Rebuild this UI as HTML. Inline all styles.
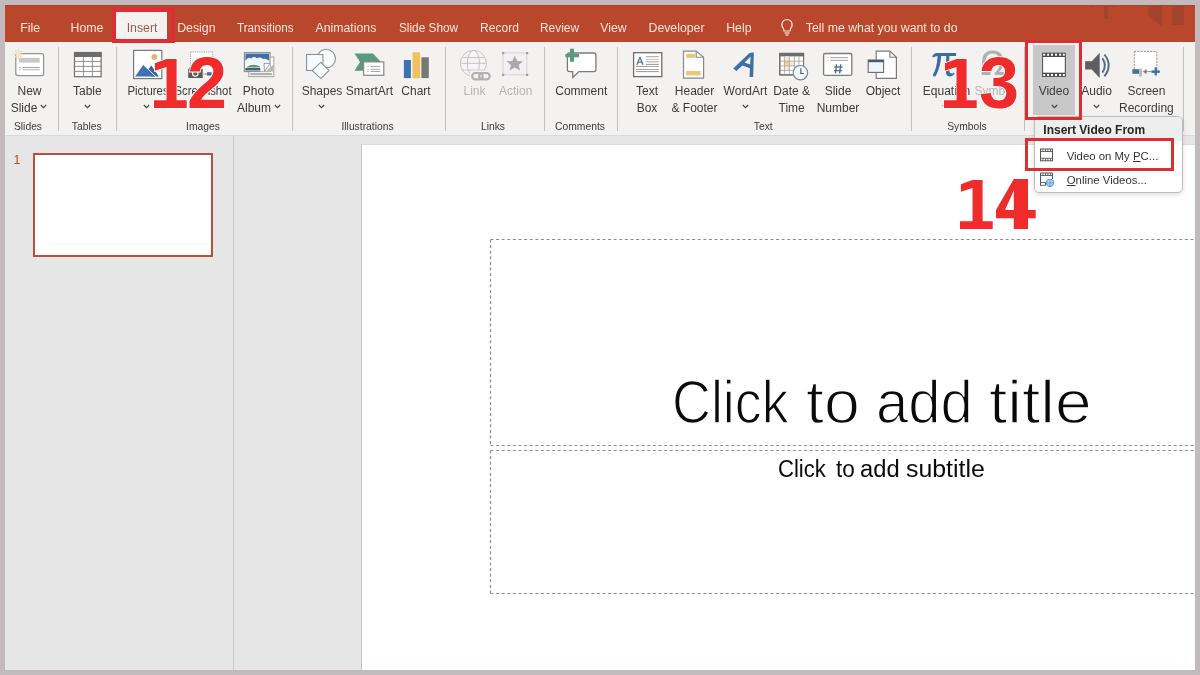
<!DOCTYPE html>
<html><head><meta charset="utf-8"><style>
html,body{margin:0;padding:0;}
body{width:1200px;height:675px;overflow:hidden;position:relative;background:#c2babc;font-family:"Liberation Sans", sans-serif;}
#root{position:absolute;left:0;top:0;width:1200px;height:675px;will-change:transform;}
</style></head><body>
<div id="root"><div style="position:absolute;left:5px;top:5px;width:1190px;height:37px;background:#b8472b;"></div><div style="position:absolute;left:5px;top:5px;width:1190px;height:1px;background:#a5402a;"></div><svg style="position:absolute;left:1085px;top:5px;" width="110" height="25" viewBox="0 0 110 25"><g fill="#a4432b"><rect x="6" y="0" width="2" height="2"/><rect x="19" y="0" width="4" height="14"/><rect x="24" y="0" width="5" height="2"/><polygon points="63,0 77,0 77,22 63,10"/><rect x="87" y="0" width="12" height="20"/></g></svg><div style="position:absolute;left:5px;top:42px;width:1190px;height:93px;background:#f3f2f1;"></div><div style="position:absolute;left:5px;top:135px;width:1190px;height:1px;background:#d9d9d9;"></div><div style="position:absolute;left:5px;top:136px;width:1190px;height:534px;background:#e6e6e6;"></div><div style="position:absolute;left:233px;top:136px;width:1px;height:534px;background:#c8c8c8;"></div><div style="position:absolute;left:20.30px;top:22.39px;height:12.3px;line-height:12.3px;font-size:12.3px;color:#fbe6de;font-weight:400;white-space:nowrap;">File</div><div style="position:absolute;left:70.50px;top:22.39px;height:12.3px;line-height:12.3px;font-size:12.3px;color:#fbe6de;font-weight:400;white-space:nowrap;">Home</div><div style="position:absolute;left:177.20px;top:22.39px;height:12.3px;line-height:12.3px;font-size:12.3px;color:#fbe6de;font-weight:400;white-space:nowrap;">Design</div><div style="position:absolute;left:236.80px;top:22.39px;height:12.3px;line-height:12.3px;font-size:12.3px;color:#fbe6de;font-weight:400;white-space:nowrap;transform:scaleX(0.95);transform-origin:0 0;">Transitions</div><div style="position:absolute;left:315.50px;top:22.39px;height:12.3px;line-height:12.3px;font-size:12.3px;color:#fbe6de;font-weight:400;white-space:nowrap;">Animations</div><div style="position:absolute;left:398.50px;top:22.39px;height:12.3px;line-height:12.3px;font-size:12.3px;color:#fbe6de;font-weight:400;white-space:nowrap;transform:scaleX(0.96);transform-origin:0 0;">Slide Show</div><div style="position:absolute;left:479.50px;top:22.39px;height:12.3px;line-height:12.3px;font-size:12.3px;color:#fbe6de;font-weight:400;white-space:nowrap;transform:scaleX(0.98);transform-origin:0 0;">Record</div><div style="position:absolute;left:540.20px;top:22.39px;height:12.3px;line-height:12.3px;font-size:12.3px;color:#fbe6de;font-weight:400;white-space:nowrap;transform:scaleX(0.97);transform-origin:0 0;">Review</div><div style="position:absolute;left:600.20px;top:22.39px;height:12.3px;line-height:12.3px;font-size:12.3px;color:#fbe6de;font-weight:400;white-space:nowrap;">View</div><div style="position:absolute;left:648.50px;top:22.39px;height:12.3px;line-height:12.3px;font-size:12.3px;color:#fbe6de;font-weight:400;white-space:nowrap;">Developer</div><div style="position:absolute;left:726.20px;top:22.39px;height:12.3px;line-height:12.3px;font-size:12.3px;color:#fbe6de;font-weight:400;white-space:nowrap;">Help</div><div style="position:absolute;left:805.80px;top:22.39px;height:12.3px;line-height:12.3px;font-size:12.3px;color:#fbe6de;font-weight:400;white-space:nowrap;">Tell me what you want to do</div><svg style="position:absolute;left:778px;top:17px;" width="18" height="20" viewBox="0 0 18 20"><g fill="none" stroke="#fbe6de" stroke-width="1.2"><path d="M5.5 11.5 C3 9.5 3 3 9 2.5 C15 3 15 9.5 12.5 11.5 L12 14 L6 14 Z"/><line x1="6.5" y1="16" x2="11.5" y2="16"/><line x1="7.5" y1="18" x2="10.5" y2="18"/></g></svg><div style="position:absolute;left:116px;top:12px;width:51px;height:30px;background:#f3f2f1;"></div><div style="position:absolute;left:126.70px;top:22.39px;height:12.3px;line-height:12.3px;font-size:12.3px;color:#8f5e52;font-weight:400;white-space:nowrap;">Insert</div><div style="position:absolute;left:58px;top:47px;width:1px;height:84px;background:#c3c1bf;"></div><div style="position:absolute;left:116px;top:47px;width:1px;height:84px;background:#c3c1bf;"></div><div style="position:absolute;left:292px;top:47px;width:1px;height:84px;background:#c3c1bf;"></div><div style="position:absolute;left:445px;top:47px;width:1px;height:84px;background:#c3c1bf;"></div><div style="position:absolute;left:544px;top:47px;width:1px;height:84px;background:#c3c1bf;"></div><div style="position:absolute;left:617px;top:47px;width:1px;height:84px;background:#c3c1bf;"></div><div style="position:absolute;left:911px;top:47px;width:1px;height:84px;background:#c3c1bf;"></div><div style="position:absolute;left:1024px;top:47px;width:1px;height:84px;background:#c3c1bf;"></div><div style="position:absolute;left:1183px;top:47px;width:1px;height:84px;background:#c3c1bf;"></div><div style="position:absolute;left:361px;top:144px;width:834px;height:526px;background:#ffffff;border-left:1px solid #c4c4c4;border-top:1px solid #dcdcdc;box-sizing:border-box;"></div><div style="position:absolute;left:33px;top:153px;width:180px;height:104px;background:#fff;border:2.5px solid #b4503d;box-sizing:border-box;"></div><div style="position:absolute;left:13.50px;top:154.09px;height:12.3px;line-height:12.3px;font-size:12.3px;color:#b7472a;font-weight:400;white-space:nowrap;">1</div><svg style="position:absolute;left:489px;top:238px;" width="706" height="360" viewBox="0 0 706 360"><g stroke="#8c8c8c" stroke-width="1.2" stroke-dasharray="3 2.6" fill="none"><line x1="1.5" y1="1.5" x2="706" y2="1.5"/><line x1="1.5" y1="1.5" x2="1.5" y2="207.5"/><line x1="1.5" y1="207.5" x2="706" y2="207.5"/><line x1="1.5" y1="212.5" x2="706" y2="212.5"/><line x1="1.5" y1="212.5" x2="1.5" y2="355.5"/><line x1="1.5" y1="355.5" x2="706" y2="355.5"/></g></svg><div style="position:absolute;left:672.31px;top:370.92px;height:62px;line-height:62px;font-size:62px;color:#0a0a0a;font-weight:400;white-space:nowrap;transform:scaleX(0.8689);transform-origin:0 0;-webkit-text-stroke:1.4px #fff;">Click</div><div style="position:absolute;left:806.43px;top:370.92px;height:62px;line-height:62px;font-size:62px;color:#0a0a0a;font-weight:400;white-space:nowrap;transform:scaleX(1.0391);transform-origin:0 0;-webkit-text-stroke:1.4px #fff;">to</div><div style="position:absolute;left:876.10px;top:370.92px;height:62px;line-height:62px;font-size:62px;color:#0a0a0a;font-weight:400;white-space:nowrap;transform:scaleX(0.9365);transform-origin:0 0;-webkit-text-stroke:1.4px #fff;">add</div><div style="position:absolute;left:988.90px;top:370.92px;height:62px;line-height:62px;font-size:62px;color:#0a0a0a;font-weight:400;white-space:nowrap;transform:scaleX(1.0645);transform-origin:0 0;-webkit-text-stroke:1.4px #fff;">title</div><div style="position:absolute;left:777.66px;top:457.61px;height:23.5px;line-height:23.5px;font-size:23.5px;color:#0a0a0a;font-weight:400;white-space:nowrap;transform:scaleX(0.94);transform-origin:0 0;">Click</div><div style="position:absolute;left:835.81px;top:457.61px;height:23.5px;line-height:23.5px;font-size:23.5px;color:#0a0a0a;font-weight:400;white-space:nowrap;transform:scaleX(0.9579);transform-origin:0 0;">to</div><div style="position:absolute;left:859.99px;top:457.61px;height:23.5px;line-height:23.5px;font-size:23.5px;color:#0a0a0a;font-weight:400;white-space:nowrap;transform:scaleX(1.0108);transform-origin:0 0;">add</div><div style="position:absolute;left:905.94px;top:457.61px;height:23.5px;line-height:23.5px;font-size:23.5px;color:#0a0a0a;font-weight:400;white-space:nowrap;transform:scaleX(1.0589);transform-origin:0 0;">subtitle</div><div style="position:absolute;left:-120.50px;top:85.04px;width:300px;height:12px;line-height:12px;font-size:12px;color:#3b3b3b;font-weight:400;text-align:center;white-space:nowrap;">New</div><div style="position:absolute;left:-126.00px;top:101.64px;width:300px;height:12px;line-height:12px;font-size:12px;color:#3b3b3b;font-weight:400;text-align:center;white-space:nowrap;">Slide</div><svg style="position:absolute;left:40.0px;top:103.8px;" width="7" height="5" viewBox="0 0 7 5"><polyline points="0.8,1 3.5,3.6 6.2,1" fill="none" stroke="#444" stroke-width="1.2"/></svg><div style="position:absolute;left:-122.00px;top:122.38px;width:300px;height:10.3px;line-height:10.3px;font-size:10.3px;color:#3b3b3b;font-weight:400;text-align:center;white-space:nowrap;">Slides</div><div style="position:absolute;left:-62.70px;top:85.04px;width:300px;height:12px;line-height:12px;font-size:12px;color:#3b3b3b;font-weight:400;text-align:center;white-space:nowrap;">Table</div><svg style="position:absolute;left:83.5px;top:103.8px;" width="7" height="5" viewBox="0 0 7 5"><polyline points="0.8,1 3.5,3.6 6.2,1" fill="none" stroke="#444" stroke-width="1.2"/></svg><div style="position:absolute;left:-63.30px;top:122.38px;width:300px;height:10.3px;line-height:10.3px;font-size:10.3px;color:#3b3b3b;font-weight:400;text-align:center;white-space:nowrap;">Tables</div><div style="position:absolute;left:-2.50px;top:85.04px;width:300px;height:12px;line-height:12px;font-size:12px;color:#3b3b3b;font-weight:400;text-align:center;white-space:nowrap;transform:scaleX(0.95);">Pictures</div><svg style="position:absolute;left:143.0px;top:103.8px;" width="7" height="5" viewBox="0 0 7 5"><polyline points="0.8,1 3.5,3.6 6.2,1" fill="none" stroke="#444" stroke-width="1.2"/></svg><div style="position:absolute;left:52.70px;top:85.04px;width:300px;height:12px;line-height:12px;font-size:12px;color:#3b3b3b;font-weight:400;text-align:center;white-space:nowrap;transform:scaleX(0.94);">Screenshot</div><div style="position:absolute;left:108.50px;top:85.04px;width:300px;height:12px;line-height:12px;font-size:12px;color:#3b3b3b;font-weight:400;text-align:center;white-space:nowrap;">Photo</div><div style="position:absolute;left:104.00px;top:101.64px;width:300px;height:12px;line-height:12px;font-size:12px;color:#3b3b3b;font-weight:400;text-align:center;white-space:nowrap;">Album</div><svg style="position:absolute;left:274.0px;top:103.8px;" width="7" height="5" viewBox="0 0 7 5"><polyline points="0.8,1 3.5,3.6 6.2,1" fill="none" stroke="#444" stroke-width="1.2"/></svg><div style="position:absolute;left:53.00px;top:122.38px;width:300px;height:10.3px;line-height:10.3px;font-size:10.3px;color:#3b3b3b;font-weight:400;text-align:center;white-space:nowrap;">Images</div><div style="position:absolute;left:172.00px;top:85.04px;width:300px;height:12px;line-height:12px;font-size:12px;color:#3b3b3b;font-weight:400;text-align:center;white-space:nowrap;">Shapes</div><svg style="position:absolute;left:317.5px;top:103.8px;" width="7" height="5" viewBox="0 0 7 5"><polyline points="0.8,1 3.5,3.6 6.2,1" fill="none" stroke="#444" stroke-width="1.2"/></svg><div style="position:absolute;left:219.50px;top:85.04px;width:300px;height:12px;line-height:12px;font-size:12px;color:#3b3b3b;font-weight:400;text-align:center;white-space:nowrap;">SmartArt</div><div style="position:absolute;left:266.00px;top:85.04px;width:300px;height:12px;line-height:12px;font-size:12px;color:#3b3b3b;font-weight:400;text-align:center;white-space:nowrap;">Chart</div><div style="position:absolute;left:217.50px;top:122.38px;width:300px;height:10.3px;line-height:10.3px;font-size:10.3px;color:#3b3b3b;font-weight:400;text-align:center;white-space:nowrap;">Illustrations</div><div style="position:absolute;left:324.50px;top:85.04px;width:300px;height:12px;line-height:12px;font-size:12px;color:#b4b4b4;font-weight:400;text-align:center;white-space:nowrap;">Link</div><div style="position:absolute;left:365.70px;top:85.04px;width:300px;height:12px;line-height:12px;font-size:12px;color:#b4b4b4;font-weight:400;text-align:center;white-space:nowrap;">Action</div><div style="position:absolute;left:343.00px;top:122.38px;width:300px;height:10.3px;line-height:10.3px;font-size:10.3px;color:#3b3b3b;font-weight:400;text-align:center;white-space:nowrap;">Links</div><div style="position:absolute;left:431.30px;top:85.04px;width:300px;height:12px;line-height:12px;font-size:12px;color:#3b3b3b;font-weight:400;text-align:center;white-space:nowrap;">Comment</div><div style="position:absolute;left:430.00px;top:122.38px;width:300px;height:10.3px;line-height:10.3px;font-size:10.3px;color:#3b3b3b;font-weight:400;text-align:center;white-space:nowrap;">Comments</div><div style="position:absolute;left:497.00px;top:85.04px;width:300px;height:12px;line-height:12px;font-size:12px;color:#3b3b3b;font-weight:400;text-align:center;white-space:nowrap;">Text</div><div style="position:absolute;left:497.00px;top:101.64px;width:300px;height:12px;line-height:12px;font-size:12px;color:#3b3b3b;font-weight:400;text-align:center;white-space:nowrap;">Box</div><div style="position:absolute;left:544.50px;top:85.04px;width:300px;height:12px;line-height:12px;font-size:12px;color:#3b3b3b;font-weight:400;text-align:center;white-space:nowrap;">Header</div><div style="position:absolute;left:544.50px;top:101.64px;width:300px;height:12px;line-height:12px;font-size:12px;color:#3b3b3b;font-weight:400;text-align:center;white-space:nowrap;">&amp; Footer</div><div style="position:absolute;left:595.50px;top:85.04px;width:300px;height:12px;line-height:12px;font-size:12px;color:#3b3b3b;font-weight:400;text-align:center;white-space:nowrap;">WordArt</div><svg style="position:absolute;left:741.5px;top:103.8px;" width="7" height="5" viewBox="0 0 7 5"><polyline points="0.8,1 3.5,3.6 6.2,1" fill="none" stroke="#444" stroke-width="1.2"/></svg><div style="position:absolute;left:641.70px;top:85.04px;width:300px;height:12px;line-height:12px;font-size:12px;color:#3b3b3b;font-weight:400;text-align:center;white-space:nowrap;">Date &amp;</div><div style="position:absolute;left:641.70px;top:101.64px;width:300px;height:12px;line-height:12px;font-size:12px;color:#3b3b3b;font-weight:400;text-align:center;white-space:nowrap;">Time</div><div style="position:absolute;left:688.00px;top:85.04px;width:300px;height:12px;line-height:12px;font-size:12px;color:#3b3b3b;font-weight:400;text-align:center;white-space:nowrap;">Slide</div><div style="position:absolute;left:688.00px;top:101.64px;width:300px;height:12px;line-height:12px;font-size:12px;color:#3b3b3b;font-weight:400;text-align:center;white-space:nowrap;">Number</div><div style="position:absolute;left:733.00px;top:85.04px;width:300px;height:12px;line-height:12px;font-size:12px;color:#3b3b3b;font-weight:400;text-align:center;white-space:nowrap;">Object</div><div style="position:absolute;left:613.30px;top:122.38px;width:300px;height:10.3px;line-height:10.3px;font-size:10.3px;color:#3b3b3b;font-weight:400;text-align:center;white-space:nowrap;">Text</div><div style="position:absolute;left:922.80px;top:85.04px;height:12px;line-height:12px;font-size:12px;color:#3b3b3b;font-weight:400;white-space:nowrap;">Equation</div><svg style="position:absolute;left:941.5px;top:103.8px;" width="7" height="5" viewBox="0 0 7 5"><polyline points="0.8,1 3.5,3.6 6.2,1" fill="none" stroke="#444" stroke-width="1.2"/></svg><div style="position:absolute;left:974.60px;top:85.04px;height:12px;line-height:12px;font-size:12px;color:#b4b4b4;font-weight:400;white-space:nowrap;">Symbol</div><div style="position:absolute;left:816.90px;top:122.38px;width:300px;height:10.3px;line-height:10.3px;font-size:10.3px;color:#3b3b3b;font-weight:400;text-align:center;white-space:nowrap;">Symbols</div><div style="position:absolute;left:1033px;top:45px;width:42px;height:70px;background:#c8c8c8;"></div><div style="position:absolute;left:903.90px;top:85.04px;width:300px;height:12px;line-height:12px;font-size:12px;color:#3b3b3b;font-weight:400;text-align:center;white-space:nowrap;">Video</div><svg style="position:absolute;left:1050.5px;top:103.8px;" width="7" height="5" viewBox="0 0 7 5"><polyline points="0.8,1 3.5,3.6 6.2,1" fill="none" stroke="#444" stroke-width="1.2"/></svg><div style="position:absolute;left:946.60px;top:85.04px;width:300px;height:12px;line-height:12px;font-size:12px;color:#3b3b3b;font-weight:400;text-align:center;white-space:nowrap;">Audio</div><svg style="position:absolute;left:1092.5px;top:103.8px;" width="7" height="5" viewBox="0 0 7 5"><polyline points="0.8,1 3.5,3.6 6.2,1" fill="none" stroke="#444" stroke-width="1.2"/></svg><div style="position:absolute;left:996.40px;top:85.04px;width:300px;height:12px;line-height:12px;font-size:12px;color:#3b3b3b;font-weight:400;text-align:center;white-space:nowrap;">Screen</div><div style="position:absolute;left:996.40px;top:101.64px;width:300px;height:12px;line-height:12px;font-size:12px;color:#3b3b3b;font-weight:400;text-align:center;white-space:nowrap;">Recording</div><svg style="position:absolute;left:8px;top:46px;" width="40" height="34" viewBox="0 0 40 34"><rect x="7.8" y="7.5" width="27.8" height="22" rx="2" fill="#fff" stroke="#939393" stroke-width="1.25"/><rect x="11" y="11.8" width="20.7" height="4.8" fill="#c9c9c9"/><rect x="11" y="21" width="1.8" height="0.9" fill="#999"/><rect x="14.5" y="21" width="17.2" height="0.9" fill="#999"/><rect x="11" y="23.3" width="1.8" height="0.9" fill="#aaa"/><rect x="14.5" y="23.3" width="17.2" height="0.9" fill="#aaa"/><g stroke="#ecdcae" stroke-width="1.1"><line x1="10.3" y1="3" x2="10.3" y2="13.2"/><line x1="5.2" y1="8.1" x2="15.4" y2="8.1"/><line x1="6.7" y1="4.5" x2="13.9" y2="11.7"/><line x1="13.9" y1="4.5" x2="6.7" y2="11.7"/></g><circle cx="10.3" cy="8.1" r="2.4" fill="#f5e6c2"/></svg><svg style="position:absolute;left:68px;top:46px;" width="40" height="34" viewBox="0 0 40 34"><rect x="6.5" y="6.5" width="26.6" height="24.2" fill="#fff" stroke="#6d6d6d" stroke-width="1.2"/><rect x="6" y="6" width="27.6" height="5" fill="#6d6d6d"/><g stroke="#8e8e8e" stroke-width="1"><line x1="15.4" y1="11" x2="15.4" y2="30.7"/><line x1="24.4" y1="11" x2="24.4" y2="30.7"/><line x1="6.5" y1="15.4" x2="33.1" y2="15.4"/><line x1="6.5" y1="20.4" x2="33.1" y2="20.4"/><line x1="6.5" y1="25.4" x2="33.1" y2="25.4"/></g></svg><svg style="position:absolute;left:128px;top:44px;" width="40" height="40" viewBox="0 0 40 40"><rect x="5.6" y="6.4" width="28.2" height="28.2" fill="#fff" stroke="#7a7a7a" stroke-width="1.2"/><circle cx="26.4" cy="13" r="2.9" fill="#d7bb6c"/><polygon points="30.8,32.6 23.4,21.6 18.2,27.8 23.2,32.6" fill="#36609a"/><polygon points="7.1,32.6 15.4,20.7 27.9,32.6" fill="#3f72b3"/><line x1="15.4" y1="20.7" x2="27.9" y2="32.6" stroke="#fff" stroke-width="0.9"/></svg><svg style="position:absolute;left:182px;top:44px;" width="40" height="40" viewBox="0 0 40 40"><rect x="8.5" y="8" width="22.3" height="22" fill="#fff" stroke="#9a9a9a" stroke-width="0.9" stroke-dasharray="1.2 1"/><rect x="6.2" y="24.9" width="14.5" height="9.1" fill="#5a5a5a"/><rect x="7.2" y="23.6" width="3" height="1.5" fill="#5a5a5a"/><circle cx="13.3" cy="29.6" r="2.7" fill="none" stroke="#fff" stroke-width="1.1"/><line x1="22.5" y1="30" x2="24.8" y2="30" stroke="#888" stroke-width="0.8"/><rect x="25" y="28.2" width="4.6" height="3.3" fill="#3f6ea6"/></svg><svg style="position:absolute;left:238px;top:44px;" width="40" height="40" viewBox="0 0 40 40"><rect x="10.8" y="13" width="25" height="19.6" fill="#fff" stroke="#a8a8a8" stroke-width="1.1"/><rect x="12.3" y="29" width="22" height="2.2" fill="#b0b0ae"/><rect x="6.4" y="8.6" width="25.6" height="19" fill="#fff" stroke="#8a8a8a" stroke-width="1.1"/><rect x="7.4" y="9.6" width="23.6" height="7.2" fill="#3f6ea6"/><path d="M7.4 16.8 Q10 12.5 13 14.5 Q16 11.8 19 14.2 Q22 12.5 25 15 Q28 14 31 16.8 L31 20 L7.4 20 Z" fill="#eef4f8"/><path d="M8.5 23 Q15 18.6 22 22.5 L22 23.5 L8.5 23.5 Z" fill="#5e9872"/><rect x="7.4" y="24" width="15" height="2.5" fill="#3f6178"/><polygon points="22.5,27.6 26,19 32,19 32,27.6" fill="#f2f2f2"/><polygon points="26,19.5 32,19.5 26.5,27.6" fill="#fff" stroke="#8a8a8a" stroke-width="0.8"/><polygon points="28,27.6 35,21 35,27.6" fill="#b8b8b8"/></svg><svg style="position:absolute;left:300px;top:44px;" width="40" height="40" viewBox="0 0 40 40"><circle cx="26.2" cy="14.6" r="9.3" fill="#fbfdfe" stroke="#8a9096" stroke-width="1.1"/><rect x="6.6" y="10.5" width="16.3" height="16" fill="#f8fbfd" stroke="#8a9096" stroke-width="1.1"/><polygon points="20.7,18.4 29,26.4 20.9,34.6 12.2,26.4" fill="#f8fbfd" stroke="#8a9096" stroke-width="1.1"/></svg><svg style="position:absolute;left:348px;top:44px;" width="40" height="40" viewBox="0 0 40 40"><polygon points="6.5,9.5 25,9.5 33,18 25,26.7 6.5,26.7 12,18" fill="#5b9a80"/><rect x="15.6" y="17.9" width="20.2" height="13.4" fill="#fff" stroke="#888" stroke-width="1.2"/><g fill="#9a9a9a"><rect x="19.5" y="22" width="1" height="1"/><rect x="22.5" y="22" width="9.5" height="0.9"/><rect x="19.5" y="24.8" width="1" height="1"/><rect x="22.5" y="24.8" width="9.5" height="0.9"/><rect x="19.5" y="27" width="1" height="1"/><rect x="22.5" y="27" width="9.5" height="0.9"/></g></svg><svg style="position:absolute;left:398px;top:44px;" width="40" height="40" viewBox="0 0 40 40"><rect x="5.9" y="16" width="7" height="18.1" fill="#3a72b4"/><rect x="14.5" y="8.3" width="7.7" height="25.8" fill="#efc25e"/><rect x="23.4" y="13.3" width="7.4" height="20.8" fill="#777"/></svg><svg style="position:absolute;left:455px;top:44px;" width="40" height="40" viewBox="0 0 40 40"><g fill="none" stroke="#c4c4c4" stroke-width="1"><circle cx="18.4" cy="19.3" r="13" fill="#f7f4f7"/><ellipse cx="18.4" cy="19.3" rx="6" ry="13"/><line x1="5.4" y1="19.3" x2="31.4" y2="19.3"/><path d="M7.5 13.6 H29.3 M7.5 26.1 H29.3"/></g><rect x="15" y="26.5" width="22" height="11" rx="5" fill="#f3f2f1"/><g fill="none" stroke="#b0b0b0" stroke-width="2.2"><rect x="17.2" y="29" width="10.5" height="6.4" rx="3.2"/><rect x="24.2" y="29" width="10.5" height="6.4" rx="3.2"/></g></svg><svg style="position:absolute;left:496px;top:44px;" width="40" height="40" viewBox="0 0 40 40"><rect x="7" y="8.9" width="23.9" height="21.9" fill="#f3f0f3" stroke="#d3d3d3" stroke-width="1"/><g fill="#9c9c9c"><rect x="6" y="8" width="2.2" height="2.2"/><rect x="30" y="8" width="2.2" height="2.2"/><rect x="6" y="29.8" width="2.2" height="2.2"/><rect x="30" y="29.8" width="2.2" height="2.2"/></g><polygon points="18.8,11.8 21.3,17 27,17.3 22.6,21 24.1,26.6 18.8,23.5 13.5,26.6 15,21 10.6,17.3 16.3,17" fill="#a9a9a9"/></svg><svg style="position:absolute;left:560px;top:44px;" width="40" height="40" viewBox="0 0 40 40"><path d="M9.4 9 H33.9 Q35.9 9 35.9 11 V25.6 Q35.9 27.6 33.9 27.6 H19 L12.7 33.5 V27.6 H9.4 Q7.4 27.6 7.4 25.6 V11 Q7.4 9 9.4 9 Z" fill="#fff" stroke="#7b7b7b" stroke-width="1.3"/><rect x="5.3" y="10" width="13.7" height="3.3" fill="#5b9a80"/><rect x="10" y="4.7" width="4" height="13.1" fill="#5b9a80"/></svg><svg style="position:absolute;left:628px;top:44px;" width="40" height="40" viewBox="0 0 40 40"><rect x="5.6" y="8.7" width="28.2" height="23.9" fill="#fff" stroke="#6d6d6d" stroke-width="1.3"/><path d="M8.2 20.8 L11.3 12.7 L12.6 12.7 L15.7 20.8 L14 20.8 L13.3 18.8 L10.6 18.8 L9.9 20.8 Z M11 17.4 L12.9 17.4 L11.95 14.5 Z" fill="#5c7a98"/><g stroke-width="0.9"><line x1="18" y1="12.7" x2="30.8" y2="12.7" stroke="#9a9a9a"/><line x1="18" y1="15.4" x2="30.8" y2="15.4" stroke="#c8b893"/><line x1="18" y1="17.8" x2="30.8" y2="17.8" stroke="#9a9a9a"/><line x1="18" y1="20.4" x2="30.8" y2="20.4" stroke="#8a8a8a"/><line x1="8" y1="22.5" x2="30.8" y2="22.5" stroke="#999"/><line x1="8" y1="25.5" x2="30.8" y2="25.5" stroke="#999"/><line x1="8" y1="27.6" x2="30.8" y2="27.6" stroke="#8a8a8a"/></g></svg><svg style="position:absolute;left:674px;top:44px;" width="40" height="40" viewBox="0 0 40 40"><path d="M9.5 7.1 H22.2 L29.6 13.3 V34.1 H9.5 Z" fill="#fff" stroke="#8a8a8a" stroke-width="1.2"/><path d="M22.2 7.1 V13.3 H29.6" fill="none" stroke="#8a8a8a" stroke-width="1.1"/><rect x="12.1" y="9.8" width="9.2" height="4.1" fill="#e7c77c"/><rect x="12.1" y="27" width="14.6" height="4.4" fill="#e7c77c"/></svg><svg style="position:absolute;left:724px;top:44px;" width="40" height="40" viewBox="0 0 40 40"><path d="M9.2 24.4 L25.2 9.2 Q27 8.3 29.8 8.5 L29.2 33 L25.6 33 L25.9 24.2 L18.4 21.6 L12.5 27 Z M26.1 20.6 L26.6 12.6 L20.6 18.6 Z" fill="#3d6fa8" fill-rule="evenodd"/></svg><svg style="position:absolute;left:774px;top:44px;" width="40" height="40" viewBox="0 0 40 40"><rect x="5.8" y="9.4" width="23.8" height="21.5" fill="#fff" stroke="#6d6d6d" stroke-width="1.1"/><rect x="5.3" y="8.9" width="24.8" height="3.5" fill="#6d6d6d"/><rect x="10.4" y="17.2" width="5" height="4.7" fill="#f3cf9a"/><rect x="10.4" y="12.4" width="5" height="4.8" fill="#fbead0"/><rect x="15.4" y="17.2" width="5" height="4.7" fill="#fbead0"/><rect x="10.4" y="21.9" width="5" height="4.5" fill="#fbead0"/><g stroke="#a8a8a8" stroke-width="0.9"><line x1="10.4" y1="12.4" x2="10.4" y2="30.9"/><line x1="15.4" y1="12.4" x2="15.4" y2="30.9"/><line x1="20.4" y1="12.4" x2="20.4" y2="30.9"/><line x1="24.9" y1="12.4" x2="24.9" y2="30.9"/><line x1="5.8" y1="17.2" x2="29.6" y2="17.2"/><line x1="5.8" y1="21.9" x2="29.6" y2="21.9"/><line x1="5.8" y1="26.4" x2="29.6" y2="26.4"/></g><line x1="5.8" y1="9.4" x2="5.8" y2="30.9" stroke="#6d6d6d" stroke-width="1.1"/><line x1="5.8" y1="30.9" x2="22" y2="30.9" stroke="#6d6d6d" stroke-width="1.1"/><circle cx="26.4" cy="28.7" r="7.2" fill="#f6f9fb" stroke="#7d8a93" stroke-width="1.2"/><path d="M26.8 24.3 V29.5 H29.8" fill="none" stroke="#555" stroke-width="1.1"/></svg><svg style="position:absolute;left:818px;top:44px;" width="40" height="40" viewBox="0 0 40 40"><rect x="5.6" y="9.5" width="28.2" height="21.9" rx="1.5" fill="#fff" stroke="#7b7b7b" stroke-width="1.3"/><g stroke="#9a9a9a" stroke-width="0.9"><line x1="9.5" y1="13.6" x2="10.5" y2="13.6"/><line x1="12.3" y1="13.6" x2="29.9" y2="13.6"/><line x1="9.5" y1="16.3" x2="10.5" y2="16.3"/><line x1="12.3" y1="16.3" x2="29.9" y2="16.3"/></g><g stroke="#4c6c88" stroke-width="1.3"><line x1="18.5" y1="20.4" x2="17.4" y2="29.3"/><line x1="22.7" y1="20.4" x2="21.6" y2="29.3"/><line x1="16.3" y1="23" x2="24.6" y2="23"/><line x1="15.8" y1="26.6" x2="24.1" y2="26.6"/></g></svg><svg style="position:absolute;left:862px;top:44px;" width="40" height="40" viewBox="0 0 40 40"><path d="M14.2 7.1 H27.9 L34.4 13.3 V34.4 H14.2 Z" fill="#fff" stroke="#7b7b7b" stroke-width="1.2"/><path d="M27.9 7.1 V13.3 H34.4" fill="none" stroke="#7b7b7b" stroke-width="1.1"/><rect x="6.2" y="16" width="15.4" height="12.4" fill="#eef6fb" stroke="#6a6a6a" stroke-width="1.1"/><rect x="6.2" y="16" width="15.4" height="2.2" fill="#4a5a6a"/></svg><svg style="position:absolute;left:925px;top:44px;" width="40" height="40" viewBox="0 0 40 40"><path d="M7.2 12.5 Q8.5 9 12 9 L31.1 9 L31.1 12 L24.3 12 L24.3 26 Q24.3 29.5 27 29.5 Q28.2 29.5 29 28.5 L29.6 29.2 Q28 32.4 24.6 32.4 Q21 32.4 21 28 L21.2 12 L16.1 12 Q15.8 22 11 31.5 Q10.3 32.4 9.3 32.4 Q7.5 32.4 8 30.5 Q12 24 12.6 12 Q10 12 8.4 13.5 Z" fill="#3f6ba5"/></svg><svg style="position:absolute;left:975px;top:44px;" width="40" height="40" viewBox="0 0 40 40"><path d="M6.6 31.1 L6.6 28 L11.5 28 Q7 24.5 7 18.5 Q7 6.4 17.7 6.4 Q28.4 6.4 28.4 18.5 Q28.4 24.5 24 28 L28.8 28 L28.8 31.1 L19.8 31.1 L19.8 28.5 Q24.8 25 24.8 18.5 Q24.8 9.6 17.7 9.6 Q10.6 9.6 10.6 18.5 Q10.6 25 15.6 28.5 L15.6 31.1 Z" fill="#b0b0b0"/></svg><svg style="position:absolute;left:1036px;top:46px;" width="40" height="38" viewBox="0 0 40 38"><rect x="6.1" y="6.7" width="23.7" height="24.2" fill="#4a4a4a"/><rect x="7.1" y="11" width="21.7" height="15.7" fill="#fff"/><g fill="#fff"><rect x="7.2" y="7.7" width="2" height="2"/><rect x="11.1" y="7.7" width="2" height="2"/><rect x="15" y="7.7" width="2" height="2"/><rect x="19" y="7.7" width="2" height="2"/><rect x="23.1" y="7.7" width="2" height="2"/><rect x="26.8" y="7.7" width="2" height="2"/><rect x="7.2" y="28" width="2" height="2"/><rect x="11.1" y="28" width="2" height="2"/><rect x="15" y="28" width="2" height="2"/><rect x="19" y="28" width="2" height="2"/><rect x="23.1" y="28" width="2" height="2"/><rect x="26.8" y="28" width="2" height="2"/></g></svg><svg style="position:absolute;left:1080px;top:46px;" width="40" height="38" viewBox="0 0 40 38"><polygon points="5.1,15.2 11.8,15.2 19.7,6.7 19.7,32.1 11.8,23.6 5.1,23.6" fill="#5f5f5f"/><g fill="none" stroke="#4f6a85" stroke-width="1.9"><path d="M22.4 12.2 Q27.4 19.4 22.4 26.6"/><path d="M24.4 8.5 Q33 19.4 24.4 30.3"/></g></svg><svg style="position:absolute;left:1126px;top:44px;" width="40" height="40" viewBox="0 0 40 40"><rect x="8.3" y="7.4" width="22.5" height="20" fill="#fff" stroke="#8a8a8a" stroke-width="0.9" stroke-dasharray="2 1.2"/><rect x="6.4" y="25.2" width="6.6" height="4.6" fill="#4a6d9a"/><rect x="13.2" y="24.5" width="2.6" height="8" fill="#b4b4b4"/><polygon points="17.8,27.3 20.6,25 20.6,30 17.8,28.3" fill="#777"/><line x1="22" y1="27.6" x2="25" y2="27.6" stroke="#888" stroke-width="0.8"/><rect x="25.5" y="26.4" width="8.3" height="2.5" fill="#3f6ea6"/><rect x="28.6" y="23.4" width="2.3" height="8" fill="#3f6ea6"/></svg><div style="position:absolute;left:1033.5px;top:115.8px;width:149px;height:77px;background:#fff;border:1px solid #bcbcbc;border-radius:5px;box-sizing:border-box;box-shadow:0 2px 5px rgba(0,0,0,0.12);overflow:hidden;"><div style="position:absolute;left:0;top:0;width:149px;height:24.5px;background:#eeeeee;"></div></div><div style="position:absolute;left:1043.30px;top:123.64px;height:12px;line-height:12px;font-size:12px;color:#262626;font-weight:700;white-space:nowrap;">Insert Video From</div><div style="position:absolute;left:1066.70px;top:150.95px;height:11.4px;line-height:11.4px;font-size:11.4px;color:#333;font-weight:400;white-space:nowrap;">Video on My <u>P</u>C...</div><div style="position:absolute;left:1066.70px;top:175.25px;height:11.4px;line-height:11.4px;font-size:11.4px;color:#333;font-weight:400;white-space:nowrap;"><u>O</u>nline Videos...</div><svg style="position:absolute;left:1038px;top:146px;" width="17" height="17" viewBox="0 0 17 17"><rect x="2.5" y="3" width="12" height="11.8" fill="#fff" stroke="#555" stroke-width="1"/><g stroke="#555" stroke-width="0.9"><line x1="2.5" y1="5.5" x2="14.5" y2="5.5"/><line x1="2.5" y1="12.3" x2="14.5" y2="12.3"/></g><g fill="#555"><rect x="4.5" y="3" width="0.8" height="2.5"/><rect x="7" y="3" width="0.8" height="2.5"/><rect x="9.5" y="3" width="0.8" height="2.5"/><rect x="12" y="3" width="0.8" height="2.5"/><rect x="4.5" y="12.3" width="0.8" height="2.5"/><rect x="7" y="12.3" width="0.8" height="2.5"/><rect x="9.5" y="12.3" width="0.8" height="2.5"/><rect x="12" y="12.3" width="0.8" height="2.5"/></g></svg><svg style="position:absolute;left:1038px;top:170px;" width="18" height="18" viewBox="0 0 18 18"><path d="M2.5 15.3 V3 H14.5 V9" fill="#fff" stroke="#555" stroke-width="1"/><line x1="2.5" y1="5.5" x2="14.5" y2="5.5" stroke="#555" stroke-width="0.9"/><g fill="#555"><rect x="4.5" y="3" width="0.8" height="2.5"/><rect x="7" y="3" width="0.8" height="2.5"/><rect x="9.5" y="3" width="0.8" height="2.5"/><rect x="12" y="3" width="0.8" height="2.5"/></g><rect x="2.5" y="12.6" width="5" height="2.7" fill="none" stroke="#555" stroke-width="0.9"/><circle cx="12" cy="12.8" r="3.6" fill="#bcd6ee" stroke="#5b9bd5" stroke-width="1.1"/><line x1="12" y1="9.2" x2="12" y2="16.4" stroke="#5b9bd5" stroke-width="0.8"/><line x1="8.4" y1="12.8" x2="15.6" y2="12.8" stroke="#5b9bd5" stroke-width="0.8"/></svg><div style="position:absolute;left:111.7px;top:8px;width:63.3px;height:34.5px;border:4.5px solid #dd2d35;box-sizing:border-box;"></div><div style="position:absolute;left:1025px;top:39.7px;width:57px;height:80.8px;border:3.6px solid #dd2d35;box-sizing:border-box;"></div><div style="position:absolute;left:1025px;top:138.4px;width:149px;height:32.19999999999999px;border:3.6px solid #dd2d35;box-sizing:border-box;"></div><svg style="position:absolute;left:150.7px;top:55.7px;" width="46" height="56" viewBox="0 0 46 56"><path transform="translate(3 3)" d="M0 41.3 H12.5 V8.1 L0.9 11.8 V4.3 L12.5 0 H22.6 V41.3 H32.7 V49 H0 Z" fill="#ef2b2b" fill-rule="evenodd" stroke="#fff" stroke-width="1.6" paint-order="stroke"/></svg><svg style="position:absolute;left:186.5px;top:47.7px;overflow:visible" width="50" height="70"><text transform="scale(1.0 1)" x="0" y="60" font-family="Liberation Sans" font-weight="700" font-size="72" fill="#ef2b2b" stroke="#fff" stroke-width="1.6" paint-order="stroke">2</text></svg><svg style="position:absolute;left:941.2px;top:55.7px;" width="46" height="56" viewBox="0 0 46 56"><path transform="translate(3 3)" d="M0 41.3 H12.5 V8.1 L0.9 11.8 V4.3 L12.5 0 H22.6 V41.3 H32.7 V49 H0 Z" fill="#ef2b2b" fill-rule="evenodd" stroke="#fff" stroke-width="1.6" paint-order="stroke"/></svg><svg style="position:absolute;left:978.8px;top:48.2px;overflow:visible" width="50" height="70"><text transform="scale(1.0 1)" x="0" y="60" font-family="Liberation Sans" font-weight="700" font-size="72" fill="#ef2b2b" stroke="#fff" stroke-width="1.6" paint-order="stroke">3</text></svg><svg style="position:absolute;left:956.6px;top:176.5px;" width="46" height="56" viewBox="0 0 46 56"><path transform="translate(3 3)" d="M0 41.3 H12.5 V8.1 L0.9 11.8 V4.3 L12.5 0 H22.6 V41.3 H32.7 V49 H0 Z" fill="#ef2b2b" fill-rule="evenodd" stroke="#fff" stroke-width="1.6" paint-order="stroke"/></svg><svg style="position:absolute;left:992.7px;top:176px;" width="46" height="56" viewBox="0 0 46 56"><path transform="translate(3 3)" d="M17.8 0 H32 V31 H39.7 V39.3 H32 V50 H17.8 V39.3 H0 V31 Z M17.8 11.5 L9 31 H17.8 Z" fill="#ef2b2b" fill-rule="evenodd" stroke="#fff" stroke-width="1.6" paint-order="stroke"/></svg></div>
</body></html>
